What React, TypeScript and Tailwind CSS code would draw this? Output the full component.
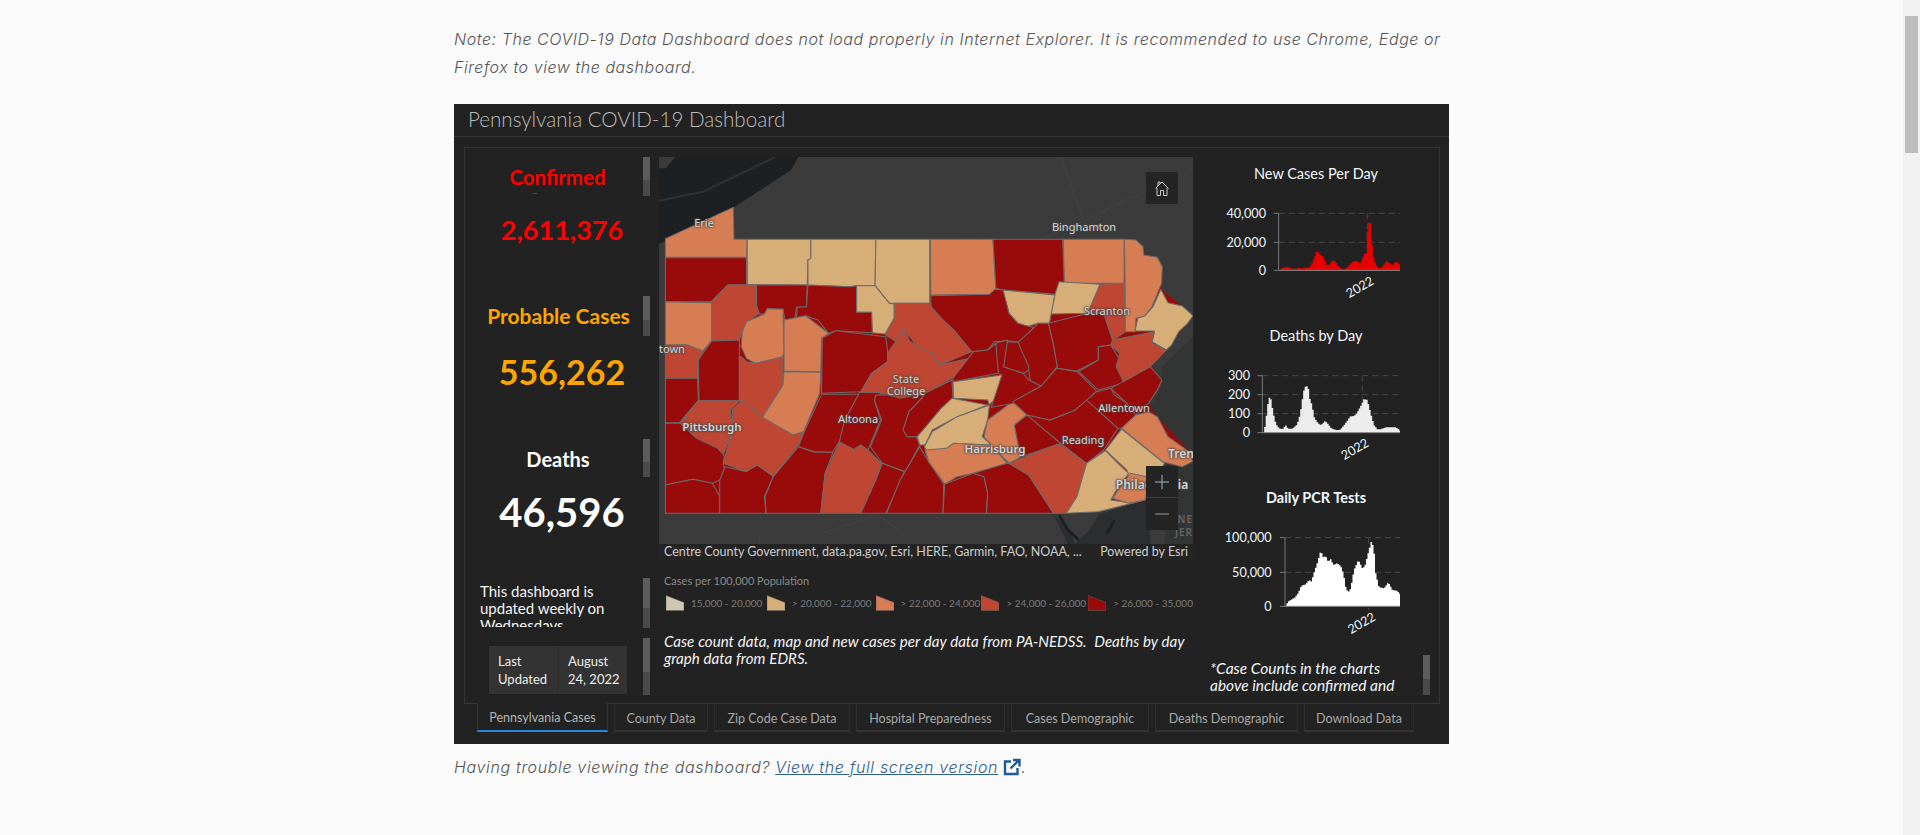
const DARK = "#990a0a";
const RED = "#bf4632";
const ORANGE = "#d67d54";
const TAN = "#d8ae78";

// county shapes traced from the map, first group in upper coords, second group offset by 540
const upper: [string, string][] = [
  [ORANGE, "43,266 233,172 235,268 272,268 270,322 43,322"],
  [DARK, "43,323 270,323 270,405 217,405 172,455 43,455"],
  [TAN, "272,268 450,268 450,325 442,330 440,405 272,403"],
  [TAN, "450,268 632,268 630,407 578,407 560,410 442,405 442,330 450,325"],
  [TAN, "632,268 783,268 783,460 670,460 630,407"],
  [ORANGE, "785,268 960,268 968,417 950,433 786,435"],
  [DARK, "960,268 1155,268 1160,400 1135,433 988,420 968,415"],
  [ORANGE, "1157,268 1327,268 1327,400 1160,400"],
  [ORANGE, "1328,268 1360,270 1380,290 1382,315 1420,322 1434,350 1432,400 1405,470 1385,498 1360,505 1358,545 1330,545 1330,400"],
  [TAN, "1430,418 1450,458 1490,468 1520,497 1505,520 1480,545 1460,585 1445,600 1405,575 1412,543 1358,543 1365,505 1385,498 1408,470"],
  [TAN, "1145,395 1260,403 1225,490 1122,492 1133,435"],
  [RED, "1260,403 1328,400 1330,545 1295,572 1270,490 1225,490"],
  [TAN, "988,420 1133,435 1118,520 1085,520 1055,530 1030,520 1005,490"],
  [DARK, "786,437 950,433 965,418 988,420 1005,490 1030,520 1075,533 1035,577 1000,572 965,575 945,600 900,605 850,540 815,505 786,470"],
  [RED, "683,460 783,460 790,475 815,505 850,540 900,605 810,645 790,610 745,595 735,570 708,540 690,575 660,555 683,500"],
  [TAN, "578,407 630,407 670,460 683,462 683,505 658,552 622,548 620,487 578,487"],
  [DARK, "298,405 440,405 438,470 410,472 405,507 378,510 372,478 328,476 322,492 305,492 298,465"],
  [DARK, "442,405 560,410 578,407 578,487 620,487 622,548 520,542 500,550 470,510 435,497 410,505 412,472 438,470"],
  [RED, "217,405 298,405 298,470 305,490 272,515 258,540 250,570 172,572 172,455"],
  [ORANGE, "258,545 270,515 320,492 328,476 372,478 375,600 372,620 335,630 295,640 270,625 255,590"],
  [ORANGE, "375,510 435,497 500,550 480,565 478,665 375,663"],
  [ORANGE, "43,455 172,458 172,572 148,603 100,585 43,585"],
  [DARK, "1115,520 1225,490 1270,490 1295,572 1290,585 1255,590 1255,630 1195,663 1140,655 1130,590"],
  [DARK, "1255,590 1290,585 1320,640 1325,700 1255,720 1200,665 1255,630"],
  [DARK, "1085,520 1115,520 1130,590 1140,650 1095,710 1065,695 1060,660 1030,577 1075,533"],
];
const lower: [string, string][] = [
  [RED, "43,45 105,45 148,63 133,90 135,145 43,145"],
  [DARK, "172,33 250,30 250,212 137,212 135,90"],
  [RED, "255,80 270,95 300,100 335,90 372,80 372,165 315,262 255,212 250,212 250,80"],
  [ORANGE, "375,125 478,127 475,190 430,305 400,315 355,295 315,262 372,165"],
  [DARK, "482,25 520,2 660,20 665,65 665,95 620,130 590,185 480,190"],
  [DARK, "43,145 133,145 135,212 82,278 43,278"],
  [RED, "135,212 250,212 225,240 230,300 205,375 190,355 130,325 85,280"],
  [RED, "258,210 315,262 400,315 432,305 412,348 345,440 300,405 270,425 205,400 230,300 230,240"],
  [DARK, "43,280 85,280 130,325 190,355 208,378 205,400 210,430 195,450 175,460 120,448 43,465"],
  [DARK, "43,465 120,448 175,460 195,500 195,550 43,550"],
  [DARK, "195,450 210,410 270,425 300,405 345,440 320,500 325,550 195,550"],
  [DARK, "480,193 585,193 560,250 530,335 510,367 460,365 415,350 432,305"],
  [DARK, "415,350 460,367 512,367 490,430 478,550 325,550 322,500 345,440"],
  [RED, "530,337 570,355 590,340 648,400 632,450 590,550 478,550 490,430"],
  [DARK, "587,187 650,187 628,210 645,270 610,360 590,345 570,358 530,335 545,270"],
  [DARK, "632,195 760,195 765,200 725,245 710,300 720,320 745,320 755,345 715,425 650,400 617,350 648,270 628,210"],
  [DARK, "650,400 712,425 695,470 660,550 590,550 632,450"],
  [DARK, "755,350 780,395 822,462 820,550 662,550 700,450"],
  [RED, "665,70 710,0 725,30 745,50 790,70 810,105 895,85 860,135 770,190 700,205 640,187 590,187 620,130 665,95"],
  [DARK, "770,190 845,150 848,205 815,235 750,320 720,320 708,300 725,245 765,200"],
  [TAN, "848,155 985,135 980,190 950,225 945,210 850,205"],
  [TAN, "815,235 845,205 945,225 860,260 790,300 770,345 755,345 748,320"],
  [TAN, "950,225 945,270 930,320 955,345 890,345 850,340 830,355 785,385 768,350 790,305 860,260"],
  [ORANGE, "770,360 830,355 850,340 955,345 1000,400 905,430 860,440 825,462 780,395"],
  [ORANGE, "1015,215 1055,255 1020,285 1030,340 1040,380 1005,400 955,345 935,320 945,270"],
  [DARK, "825,462 905,430 935,440 945,490 942,550 820,550"],
  [DARK, "905,430 1000,400 1008,402 1060,435 1130,550 942,550 945,490 935,440"],
  [RED, "1005,400 1145,340 1222,400 1195,500 1165,550 1130,550 1060,435"],
  [DARK, "1055,255 1150,340 1040,380 1030,340 1020,285"],
  [DARK, "1055,255 1120,270 1190,240 1222,210 1310,295 1270,360 1222,400 1150,340"],
  [DARK, "1222,210 1250,185 1290,175 1300,195 1335,220 1360,255 1320,295 1310,295"],
  [DARK, "1290,175 1400,110 1433,150 1420,180 1395,220 1360,255 1335,220"],
  [RED, "1295,30 1412,5 1405,40 1445,60 1400,110 1325,155 1305,110 1315,70 1290,45"],
  [DARK, "968,40 1000,30 1005,105 990,110 1045,130 1060,150 1095,168 1020,220 955,232 985,135 975,130 968,105"],
  [DARK, "905,65 945,60 968,40 975,130 848,155 848,145"],
  [DARK, "1000,35 1030,37 1060,110 1060,120 1045,130 990,110"],
  [DARK, "1138,115 1195,125 1250,183 1222,210 1190,240 1120,270 1055,255 1015,215 1095,168"],
  [ORANGE, "1360,255 1395,245 1420,260 1450,320 1515,370 1518,395 1490,410 1435,395 1320,295"],
  [TAN, "1320,297 1440,400 1420,440 1385,510 1350,520 1335,420 1275,360"],
  [TAN, "1222,400 1275,362 1310,400 1340,430 1300,490 1290,510 1350,520 1255,545 1165,550 1195,500"],
  [ORANGE, "1345,430 1390,440 1390,490 1385,510 1340,520 1295,505 1320,465"],
];

const newCases: [number, number][] = [[265,361],[275,353],[285,351],[295,352],[305,356],[320,356],[325,353],[335,356],[345,353],[355,352],[362,345],[370,325],[377,306],[384,306],[388,315],[395,317],[402,330],[408,345],[415,345],[422,335],[430,330],[440,345],[450,355],[460,358],[470,352],[480,340],[490,334],[500,334],[508,340],[515,328],[520,312],[527,310],[532,216],[540,220],[545,300],[550,330],[560,352],[568,356],[575,350],[588,333],[595,340],[600,340],[605,347],[612,337],[622,337],[630,350]];
const deaths: [number, number][] = [[218,848],[222,835],[228,790],[234,742],[240,745],[246,780],[252,810],[258,825],[265,835],[275,838],[285,826],[292,836],[305,836],[318,825],[325,805],[332,770],[338,725],[345,708],[352,710],[358,750],[364,765],[370,800],[378,815],[388,825],[395,822],[403,813],[412,822],[422,835],[435,840],[447,840],[458,828],[468,815],[478,800],[490,798],[498,790],[510,768],[520,747],[530,750],[540,790],[550,825],[560,838],[570,838],[585,832],[600,832],[615,832],[625,838],[630,845]];
const tests: [number, number][] = [[285,409],[292,395],[300,390],[312,383],[322,370],[332,347],[345,343],[355,330],[362,335],[370,308],[378,285],[390,243],[398,262],[405,258],[412,275],[420,268],[428,285],[440,280],[450,288],[458,310],[465,350],[472,368],[480,355],[490,300],[503,270],[515,295],[522,290],[532,252],[543,210],[550,245],[555,310],[565,352],[580,355],[593,337],[605,360],[620,363],[630,375]];

// turns traced peaks into the stepped area the chart library draws
function stepArea(pts: [number, number][], base: number, step = 4.5) {
  let d = `M${pts[0][0]} ${base}`;
  let i = 0;
  for (let x = pts[0][0]; x < pts[pts.length - 1][0]; x += step) {
    while (i < pts.length - 2 && pts[i + 1][0] <= x) i++;
    const [x0, y0] = pts[i];
    const [x1, y1] = pts[i + 1];
    const y = y0 + ((y1 - y0) * (x - x0)) / (x1 - x0);
    d += `V${y.toFixed(1)}H${Math.min(x + step, pts[pts.length - 1][0]).toFixed(1)}`;
  }
  return d + `V${base}Z`;
}

type ChartProps = {
  box: string;
  data: [number, number][];
  fill: string;
  axisX: number;
  tickX: number;
  base: number;
  top: number;
  grid: { y: number; label: string }[];
  labelX: number;
  yearX: number;
  yearY: number;
};

function Chart({ box, data, fill, axisX, tickX, base, top, grid, labelX, yearX, yearY }: ChartProps) {
  return (
    <svg viewBox={box} className="h-[128px] w-[230px] [font-family:Lato,sans-serif]">
      {grid.map((g) => (
        <g key={g.label}>
          {g.label !== "0" && <line x1={axisX} x2="630" y1={g.y} y2={g.y} stroke="#484848" strokeWidth="3" strokeDasharray="18 12" />}
          <line x1={axisX - 15} x2={axisX} y1={g.y} y2={g.y} stroke="#777" strokeWidth="3" />
          <text x={labelX} y={g.y + 13} textAnchor="end" fontSize="38" fill="#eef6fa">{g.label}</text>
        </g>
      ))}
      <line x1={tickX} x2={tickX} y1={top} y2={base + 12} stroke="#484848" strokeWidth="3" strokeDasharray="18 12" />
      <line x1={axisX} x2={axisX} y1={top} y2={base} stroke="#777" strokeWidth="3" />
      <path d={stepArea(data, base)} fill={fill} />
      <line x1={axisX} x2="630" y1={base} y2={base} stroke="#888" strokeWidth="3" />
      <text x={yearX} y={yearY} textAnchor="middle" fontSize="38" fill="#eef6fa" transform={`rotate(-30 ${yearX} ${yearY - 12})`}>2022</text>
    </svg>
  );
}

function Thumb({ h }: { h: string }) {
  return (
    <div className={`${h} w-[7px] shrink-0 bg-[#4a4a4a]`}>
      <div className="h-3/5 w-full bg-[#5c5c5c]" />
    </div>
  );
}

const legend = [
  { c: "#d2c7b5", pts: "0,0 18,7 18,15 0,15", text: "15,000 - 20,000", w: "w-[101px]" },
  { c: TAN, pts: "0,0 18,7 18,15 0,15", text: "> 20,000 - 22,000", w: "w-[109px]" },
  { c: ORANGE, pts: "0,0 18,7 18,15 0,15", text: "> 22,000 - 24,000", w: "w-[106px]" },
  { c: RED, pts: "0,0 18,7 18,15 0,15", text: "> 24,000 - 26,000", w: "w-[107px]" },
  { c: DARK, pts: "0,0 18,7 18,15 0,15", text: "> 26,000 - 35,000", w: "w-[105px]" },
];

const tabs = [
  { t: "County Data", w: "w-[94px]" },
  { t: "Zip Code Case Data", w: "w-[136px]" },
  { t: "Hospital Preparedness", w: "w-[149px]" },
  { t: "Cases Demographic", w: "w-[138px]" },
  { t: "Deaths Demographic", w: "w-[143px]" },
  { t: "Download Data", w: "w-[110px]" },
];

const halo = "[text-shadow:0_0_2px_#4a4a4a,0_0_2px_#4a4a4a,0_0_3px_#4a4a4a]";
const labels = [
  { t: "Erie", c: "left-[45px] top-[66px] text-[11px]" },
  { t: "Binghamton", c: "left-[425px] top-[70px] text-[11px]" },
  { t: "Scranton", c: "left-[448px] top-[154px] text-[11px]" },
  { t: "State", c: "left-[247px] top-[222px] text-[11px]" },
  { t: "College", c: "left-[247px] top-[234px] text-[11px]" },
  { t: "Altoona", c: "left-[199px] top-[262px] text-[11px]" },
  { t: "Pittsburgh", c: "left-[53px] top-[270px] text-[11.5px] font-semibold" },
  { t: "Harrisburg", c: "left-[336px] top-[292px] text-[11.5px] font-semibold" },
  { t: "Reading", c: "left-[424px] top-[283px] text-[11px]" },
  { t: "Allentown", c: "left-[465px] top-[251px] text-[11px]" },
  { t: "Philadelphia", c: "left-[493px] top-[328px] text-[12px] font-semibold" },
];

export default function App() {
  return (
    <div className="flex h-[835px] w-full overflow-hidden bg-[#fafafa] [font-family:Lato,sans-serif]">
      <main className="min-w-0 flex-1 pl-[454px] pt-[25px]">
        <div className="w-[995px]">
          <p className="mb-[23px] text-[16px] font-light italic leading-[28px] tracking-[0.55px] text-[#555] [font-family:Inter,sans-serif]">
            Note: The COVID-19 Data Dashboard does not load properly in Internet Explorer. It is recommended to use Chrome, Edge or Firefox to view the dashboard.
          </p>

          <div className="flex h-[640px] w-[995px] flex-col bg-[#222]">
            <div className="h-[33px] border-b border-[#353535] pl-[14px] text-[20.6px] font-light leading-[31px] text-[#bcbcbc]">Pennsylvania COVID-19 Dashboard</div>

            <div className="ml-[10px] mt-[10px] flex h-[557px] w-[976px] gap-[7px] border border-[#353535] pt-[9px]">
              {/* stats column */}
              <div className="mr-[2px] flex w-[185px] shrink-0 flex-col gap-[10px]">
                <div className="flex h-[129px] justify-between overflow-hidden">
                  <div className="flex-1 pr-[1px] text-center text-[#f00]">
                    <div className="ml-[8px] mt-[8px] text-[20.5px] font-bold leading-[24px]">Confirmed</div>
                    <div className="ml-[-38px] mt-[-1px] h-[8px] text-[10px] font-bold leading-[8px]">–</div>
                    <div className="ml-[17px] mt-[14px] text-[27px] font-bold leading-[40px]">2,611,376</div>
                  </div>
                  <Thumb h="h-[39px]" />
                </div>
                <div className="flex h-[133px] justify-between overflow-hidden">
                  <div className="flex-1 text-center text-[#ffa500]">
                    <div className="ml-[9px] mt-[8px] text-[21px] font-bold leading-[24px]">Probable Cases</div>
                    <div className="ml-[16px] mt-[20px] text-[34px] font-bold leading-[48px]">556,262</div>
                  </div>
                  <Thumb h="h-[40px]" />
                </div>
                <div className="flex h-[129px] justify-between overflow-hidden">
                  <div className="flex-1 text-center text-white">
                    <div className="ml-[8px] mt-[8px] text-[20px] font-bold leading-[24px]">Deaths</div>
                    <div className="ml-[16px] mt-[16px] text-[40px] font-bold leading-[50px]">46,596</div>
                  </div>
                  <Thumb h="h-[38px]" />
                </div>
                <div className="flex h-[50px] justify-between">
                  <div className="h-[49px] flex-1 overflow-hidden pl-[15px] pt-[5px] text-[15px] leading-[17px] text-[#f4f4f4]">
                    This dashboard is<br />updated weekly on<br />Wednesdays
                  </div>
                  <Thumb h="h-[50px]" />
                </div>
                <div className="flex h-[57px] justify-between">
                  <div className="ml-[24px] mt-[8px] flex h-[48px] w-[138px] bg-[#333] text-[13px] leading-[18px] text-[#eee]">
                    <div className="w-[69px] border-r border-[#2c2c2c] pl-[9px] pt-[6px]">Last<br />Updated</div>
                    <div className="pl-[10px] pt-[6px]">August<br />24, 2022</div>
                  </div>
                  <Thumb h="h-[57px]" />
                </div>
              </div>

              {/* map column */}
              <div className="w-[534px] shrink-0">
                <div className="relative h-[387px] w-[534px] overflow-hidden bg-[#3a3b3a]">
                  <svg viewBox="25 21 1495 1161" preserveAspectRatio="none" className="h-full w-full">
                    <polygon points="70,21 415,21 395,60 235,172 25,282 25,55 45,55" fill="#1d2022" />
                    <path d="M25 152 L150 125 L350 21" fill="none" stroke="#2e3234" strokeWidth="6" />
                    <polygon points="1434,650 1520,560 1520,1182 1440,1182 1450,1100 1440,900 1395,780 1430,720" fill="#333534" />
                    <polygon points="1255,1095 1400,1040 1400,1182 1170,1182 1130,1095 1170,1130 1190,1182 1230,1140" fill="#2b2d2e" />
                    <path d="M1145 1095 L1170 1140 L1200 1170 M1300 1110 L1280 1150" fill="none" stroke="#1d2022" strokeWidth="8" />
                    <path d="M1150 21 L1220 230 M1090 268 L1220 210 L1330 150 L1520 60 M310 1095 L305 1182 M480 1150 L640 1095 L730 1170" fill="none" stroke="#444645" strokeWidth="2" />
                    <polygon points="43,265 235,172 235,268 1360,270 1382,315 1434,350 1432,418 1520,497 1445,600 1405,650 1433,690 1420,720 1395,760 1420,800 1515,910 1518,935 1490,950 1440,940 1390,1040 1250,1085 1165,1090 43,1090" fill={DARK} />
                    <g stroke="#6c6c6c" strokeWidth="3" strokeLinejoin="round">
                      {upper.map(([c, p]) => <polygon key={p} points={p} fill={c} />)}
                      <g transform="translate(0 540)">
                        {lower.map(([c, p]) => <polygon key={p} points={p} fill={c} />)}
                      </g>
                    </g>
                  </svg>
                  {labels.map((l) => (
                    <span key={l.t} className={`absolute -translate-x-1/2 -translate-y-1/2 whitespace-nowrap text-[#d4d4d4] [font-family:'Noto_Sans',sans-serif] ${halo} ${l.c}`}>{l.t}</span>
                  ))}
                  <span className={`absolute left-0 top-[184px] text-[11px] leading-[16px] text-[#d4d4d4] [font-family:'Noto_Sans',sans-serif] ${halo}`}>town</span>
                  <span className={`absolute left-[509px] top-[288px] text-[12px] font-semibold leading-[18px] text-[#d4d4d4] [font-family:'Noto_Sans',sans-serif] ${halo}`}>Tren</span>
                  <span className="absolute right-0 top-[356px] text-[10px] font-semibold leading-[13px] tracking-[1px] text-[#666] [font-family:'Noto_Sans',sans-serif]">NE</span>
                  <span className="absolute right-0 top-[369px] text-[10px] font-semibold leading-[13px] tracking-[1px] text-[#666] [font-family:'Noto_Sans',sans-serif]">JER</span>

                  <button className="absolute left-[487px] top-[15px] flex size-[32px] items-center justify-center bg-[#242424]">
                    <svg viewBox="0 0 14 15" className="h-[15px] w-[14px]" fill="none" stroke="#c8c8c8" strokeWidth="1">
                      <path d="M0.5 7.5 L7 1 L13.5 7.5 M5 3 V1 H3 V5 M2 7 V14.5 H5.5 V9.5 H8.5 V14.5 H12 V7" />
                    </svg>
                  </button>
                  <div className="absolute left-[487px] top-[309px] flex w-[32px] flex-col bg-[#242424]">
                    <div className="flex h-[32px] items-center justify-center border-b border-[#3a3a3a]">
                      <svg viewBox="0 0 16 16" className="size-[16px]" stroke="#9fb6c6" strokeWidth="1"><path d="M1 8H15M8 1V15" /></svg>
                    </div>
                    <div className="flex h-[32px] items-center justify-center">
                      <svg viewBox="0 0 16 16" className="size-[16px]" stroke="#9a9a9a" strokeWidth="1"><path d="M1 8H15" /></svg>
                    </div>
                  </div>
                </div>

                <div className="flex h-[16px] items-center justify-between bg-[#242424] pl-[5px] pr-[5px] text-[12.5px] leading-[16px] text-[#ccc]">
                  <span>Centre County Government, data.pa.gov, Esri, HERE, Garmin, FAO, NOAA, ...</span>
                  <span>Powered by Esri</span>
                </div>

                <div className="pl-[5px] pt-[14px] text-[11px] leading-[14px] text-[#8a8a8a]">Cases per 100,000 Population</div>
                <div className="mt-[3px] flex h-[20px] items-end pl-[7px]">
                  {legend.map((l) => (
                    <div key={l.text} className={`flex items-end gap-[7px] ${l.w}`}>
                      <svg viewBox="0 0 18 15" className="h-[16px] w-[18px] shrink-0"><polygon points={l.pts} fill={l.c} stroke="#666" strokeWidth="0.5" /></svg>
                      <span className="whitespace-nowrap text-[10px] leading-[15px] text-[#7c7c7c]">{l.text}</span>
                    </div>
                  ))}
                </div>
                <p className="pl-[5px] pt-[22px] text-[15.1px] italic leading-[17px] text-[#f4f4f4] [word-spacing:0.3px]">
                  Case count data, map and new cases per day data from PA-NEDSS.&nbsp; Deaths by day graph data from EDRS.
                </p>
              </div>

              {/* charts column */}
              <div className="flex w-[230px] shrink-0 flex-col text-center text-[#f2f8fb]">
                <div className="h-[34px] pl-[2px] text-[14.5px] leading-[34px]">New Cases Per Day</div>
                <Chart box="30 123 690 384" data={newCases} fill="#e80000" axisX={266} tickX={532} base={361} top={190} grid={[{ y: 190, label: "40,000" }, { y: 277, label: "20,000" }, { y: 361, label: "0" }]} labelX={228} yearX={510} yearY={424} />
                <div className="h-[34px] pl-[2px] text-[14.5px] leading-[34px]">Deaths by Day</div>
                <Chart box="30 609 690 384" data={deaths} fill="#ececec" axisX={217} tickX={517} base={848} top={677} grid={[{ y: 677, label: "300" }, { y: 734, label: "200" }, { y: 791, label: "100" }, { y: 848, label: "0" }]} labelX={180} yearX={495} yearY={910} />
                <div className="h-[34px] pl-[2px] text-[14.5px] font-bold leading-[34px]">Daily PCR Tests</div>
                <Chart box="30 135 690 384" data={tests} fill="#ffffff" axisX={285} tickX={536} base={409} top={203} grid={[{ y: 203, label: "100,000" }, { y: 307, label: "50,000" }, { y: 409, label: "0" }]} labelX={245} yearX={515} yearY={472} />
                <div className="mt-[12px] flex h-[40px] justify-between">
                  <p className="h-[40px] overflow-hidden pl-[10px] pr-[15px] pt-[5px] text-left text-[15.5px] italic leading-[17px]">*Case Counts in the charts above include confirmed and probable cases.</p>
                  <Thumb h="h-[40px]" />
                </div>
              </div>
            </div>

            <div className="ml-[23px] flex h-[28px] gap-[6px] text-[12.5px] leading-[29px] text-[#a8a8a8]">
              <div className="-mt-px h-[29px] w-[131px] border-x border-b-2 border-x-[#353535] border-b-[#2387e0] bg-[#222] text-center text-[#b4b4b4]">Pennsylvania Cases</div>
              {tabs.map((t) => (
                <div key={t.t} className={`${t.w} h-[28px] border-x border-b-2 border-x-[#2e2e2e] border-b-[#333] text-center`}>{t.t}</div>
              ))}
            </div>
          </div>

          <p className="mt-[9px] flex items-center text-[16px] font-light italic leading-[28px] tracking-[0.65px] text-[#555] [font-family:Inter,sans-serif]">
            Having trouble viewing the dashboard?&nbsp;<a className="text-[#2f5f8f] underline">View the full screen version</a>
            <svg viewBox="0 0 18 18" className="ml-[5px] size-[18px]" fill="none" stroke="#1f5a96" strokeWidth="2.4">
              <path d="M8 3.5H2V16H14.5V10" />
              <path d="M7.5 10.5L15 3M10 2H16.5V8.5" />
            </svg>
            .
          </p>
        </div>
      </main>
      <div className="w-[17px] shrink-0 bg-[#f1f1f1] pl-[2px] pt-[16px]">
        <div className="h-[137px] w-[13px] bg-[#bdbdbd]" />
      </div>
    </div>
  );
}
